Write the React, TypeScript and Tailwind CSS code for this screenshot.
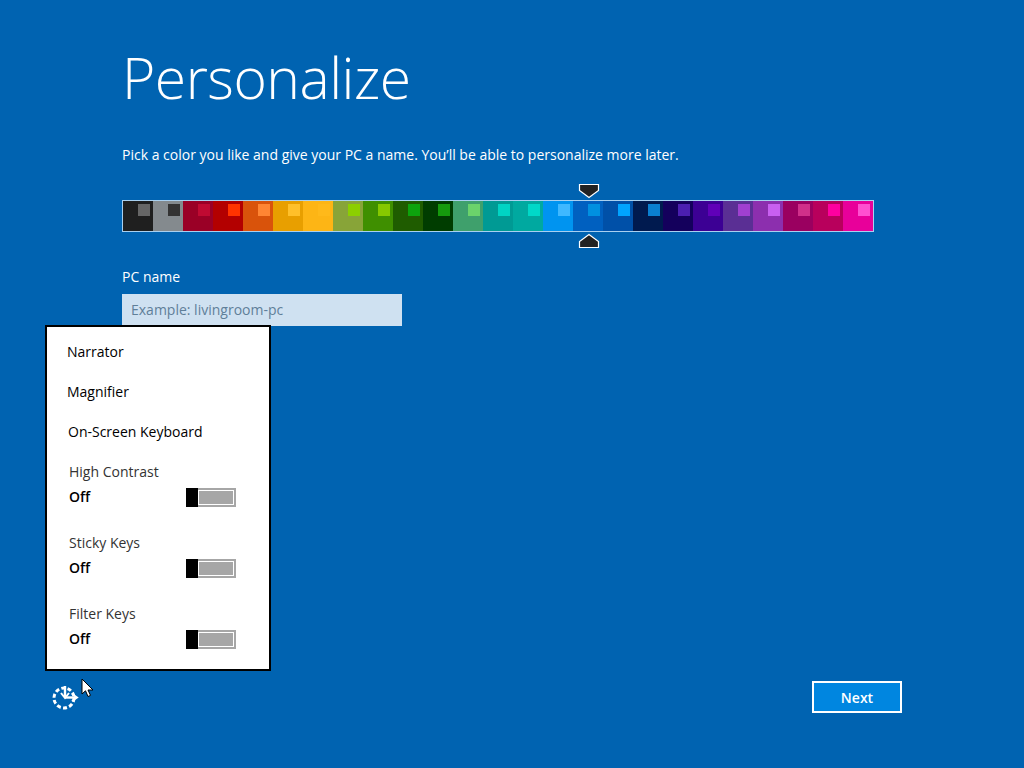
const swatches: [string, string][] = [
  ["#1f1f1f", "#666666"], ["#848a8e", "#333333"], ["#9a0026", "#c00a32"], ["#b30000", "#ff3300"],
  ["#d9530b", "#ff8533"], ["#e89f00", "#ffc02a"], ["#fdb515", "#ffb91a"], ["#88a438", "#8ccf00"],
  ["#3f8f00", "#86c800"], ["#1f5c00", "#0da30d"], ["#003d00", "#159a0d"], ["#3fa06c", "#6bd36b"],
  ["#009a94", "#00d4c4"], ["#00a9a0", "#00d8c8"], ["#0094f0", "#3fb8ff"], ["#0060c0", "#0090e0"],
  ["#0050a8", "#00a4ff"], ["#001a4f", "#0a7fd0"], ["#14005c", "#4b1fb0"], ["#3c0094", "#6000b8"],
  ["#5a2f94", "#a040d0"], ["#8c2fae", "#c860f0"], ["#9a0060", "#d0308a"], ["#b8005c", "#ff00a0"],
  ["#e8009a", "#ff50d0"],
];

function Toggle({ label }: { label: string }) {
  return (
    <div className="pl-[22px] pr-[33px] h-[71px]">
      <div className="text-[14px] leading-[20px] text-[#333333]">{label}</div>
      <div className="flex items-center justify-between mt-[5px]">
        <span className="text-[14px] leading-[20px] font-semibold text-black">Off</span>
        <div className="w-[50px] h-[19px] bg-[#a6a6a6] border-2 border-[#a6a6a6] flex relative">
          <div className="absolute left-[10px] right-0 top-0 bottom-0 border border-white" />
          <div className="absolute -left-[2px] -top-[2px] w-[12px] h-[19px] bg-black" />
        </div>
      </div>
    </div>
  );
}

export default function App() {
  return (
    <div className="relative w-[1024px] h-[768px] overflow-hidden bg-[#0063b1] text-white font-['Open_Sans',sans-serif] flex flex-col">
      <div className="pl-[122px] pr-[150px] pt-[38px] flex-1">
        <h1 className="text-[57px] leading-[78px] font-light tracking-[-0.5px]">Personalize</h1>
        <p className="mt-[29px] text-[14px] leading-[20px]">Pick a color you like and give your PC a name. You’ll be able to personalize more later.</p>
        <div className="relative mt-[35px] w-[752px] h-[32px] border border-[#a8d0f0] flex">
          {swatches.map(([bg, fg], i) => (
            <div key={i} className="w-[30px] h-[30px] pt-[3px] pl-[15px]" style={{ backgroundColor: bg }}>
              <div className="w-[12px] h-[12px]" style={{ backgroundColor: fg }} />
            </div>
          ))}
          <svg className="absolute left-[455px] -top-[18px]" width="22" height="16" viewBox="0 0 22 16">
            <path d="M1.5 1.5H20.5V7.5L11 14.5L1.5 7.5Z" fill="#222222" stroke="white" strokeWidth="1.2" />
          </svg>
          <svg className="absolute left-[455px] top-[32px]" width="22" height="16" viewBox="0 0 22 16">
            <path d="M1.5 14.5H20.5V8.5L11 1.5L1.5 8.5Z" fill="#222222" stroke="white" strokeWidth="1.2" />
          </svg>
        </div>
        <label className="block mt-[35px] text-[14px] leading-[20px]">PC name</label>
        <div className="mt-[7px] w-[280px] h-[32px] bg-[#cfe1f1] pl-[9px] text-[14px] leading-[32px] text-[#5f7f99]">Example: livingroom-pc</div>
      </div>

      <div className="flex items-center justify-between pl-[52px] pr-[122px] pb-[55px]">
        <svg width="28" height="28" viewBox="0 0 28 28" fill="none" stroke="white" strokeWidth="3">
          <circle cx="12" cy="15" r="10" strokeDasharray="4 2.3" />
          <path d="M13 3V14" strokeWidth="2.4" />
          <path d="M9 10L13 15L17 10" strokeWidth="2" />
          <path d="M13 14.5H24" strokeWidth="2.4" />
          <path d="M20 11L25 14.5L20 18" strokeWidth="2" />
        </svg>
        <button className="w-[90px] h-[32px] border-2 border-white bg-[#0086e0] text-[14px] font-semibold text-white">Next</button>
      </div>

      <div className="absolute left-[45px] top-[325px] w-[226px] h-[346px] bg-white border-2 border-black text-black pt-[15px]">
        <div className="pl-[20px] text-[14px] leading-[20px] h-[40px]">Narrator</div>
        <div className="pl-[20px] text-[14px] leading-[20px] h-[40px]">Magnifier</div>
        <div className="pl-[21px] text-[14px] leading-[20px] h-[40px]">On-Screen Keyboard</div>
        <Toggle label="High Contrast" />
        <Toggle label="Sticky Keys" />
        <Toggle label="Filter Keys" />
      </div>

      <svg className="absolute left-[81px] top-[678px]" width="14" height="21" viewBox="0 0 14 21">
        <path d="M1 1V16L4.5 12.8L7 18.5L9.5 17.4L7 12H12Z" fill="white" stroke="black" strokeWidth="1" />
      </svg>
    </div>
  );
}
